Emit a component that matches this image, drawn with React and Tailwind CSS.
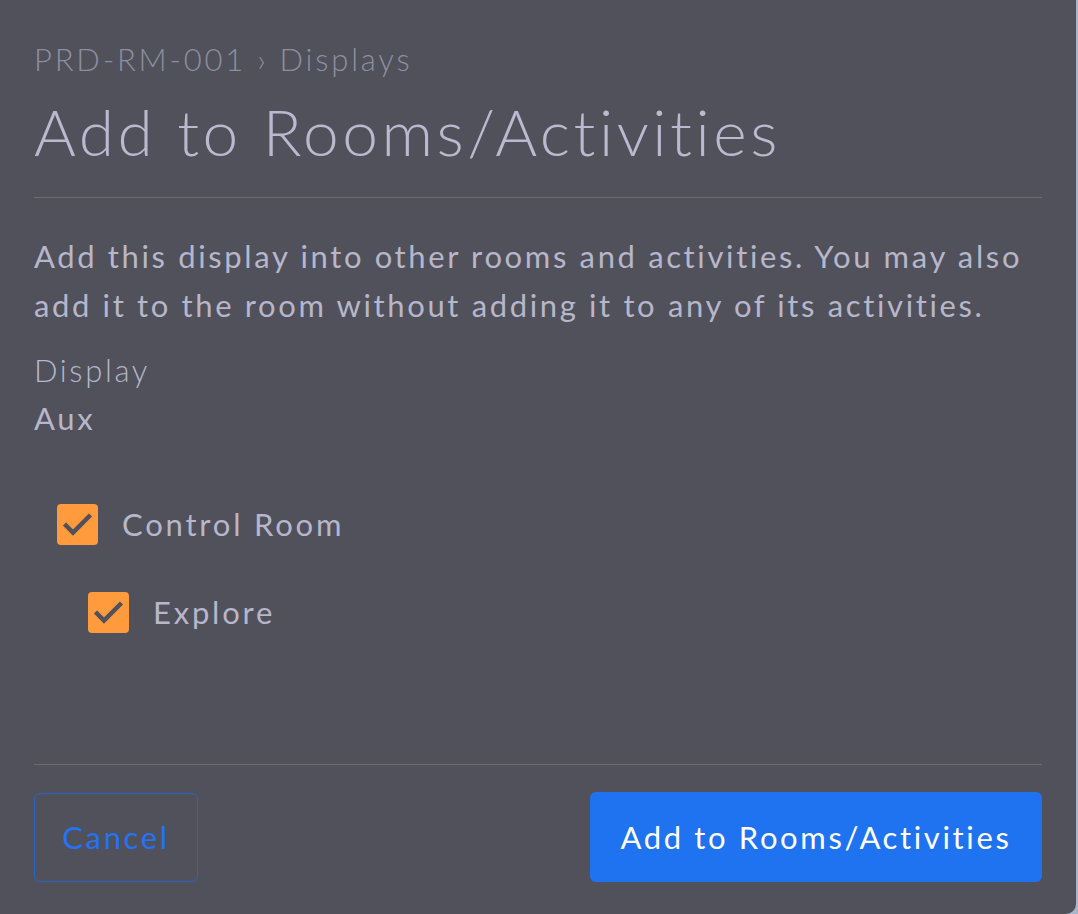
import { useState } from 'react'

function Check({ checked, onToggle, label, indent }) {
  return (
    <label className={`flex items-center cursor-pointer ${indent ? 'pl-[54px]' : 'pl-[23px]'}`}>
      <button
        type="button"
        onClick={onToggle}
        className="w-[41px] h-[41px] rounded-[4px] bg-[#ff9a3d] flex items-center justify-center shrink-0"
      >
        {checked && (
          <svg width="41" height="41" viewBox="0 0 41 41" fill="none">
            <path d="M7.5 20 L16 28.5 L33.5 11" stroke="#50515a" strokeWidth="4.5" strokeLinecap="butt" strokeLinejoin="miter" />
          </svg>
        )}
      </button>
      <span className="ml-[24px] text-[31px] leading-none tracking-[0.09em] text-[#b7b6cb]">{label}</span>
    </label>
  )
}

export default function App() {
  const [room, setRoom] = useState(true)
  const [explore, setExplore] = useState(true)

  return (
    <div className="w-[1078px] h-[914px] bg-[#a9b5cb] font-['Lato',sans-serif]">
      <div className="w-[1076px] h-[914px] bg-[#50515a] rounded-br-[10px] flex flex-col px-[34px]">
        <div className="pt-[42px] text-[31px] leading-[34px] tracking-[0.09em] text-[#8f8ea0] font-light">
          PRD-RM-001 › Displays
        </div>
        <h1 className="mt-[22px] text-[64px] leading-[68px] tracking-[0.055em] text-[#bab9d0] font-light">
          Add to Rooms/Activities
        </h1>
        <div className="mt-[31px] h-px bg-[#6c6c6f]" />
        <p className="mt-[34px] text-[31px] leading-[49px] tracking-[0.085em] text-[#b7b6cb]">
          Add this display into other rooms and activities. You may also add it to the room without adding it to any of its activities.
        </p>
        <div className="mt-[16px] text-[31px] leading-[48px] tracking-[0.085em] text-[#b7b6cb] font-light">Display</div>
        <div className="text-[31px] leading-[48px] tracking-[0.085em] text-[#b7b6cb]">Aux</div>
        <div className="mt-[62px] flex flex-col gap-[47px]">
          <Check checked={room} onToggle={() => setRoom(!room)} label="Control Room" />
          <Check checked={explore} onToggle={() => setExplore(!explore)} label="Explore" indent />
        </div>
        <div className="mt-auto h-px bg-[#6c6c6f]" />
        <div className="mt-[27px] mb-[32px] flex justify-between items-center">
          <button className="w-[164px] h-[89px] rounded-[6px] border border-[#2a64c9] text-[31px] tracking-[0.085em] text-[#2473f2]">
            Cancel
          </button>
          <button className="w-[452px] h-[90px] rounded-[6px] bg-[#1f72f0] text-[31px] tracking-[0.085em] text-white">
            Add to Rooms/Activities
          </button>
        </div>
      </div>
    </div>
  )
}
